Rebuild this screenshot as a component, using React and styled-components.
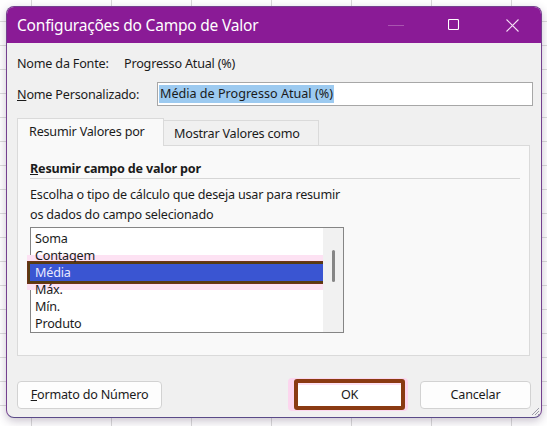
import React from "react";
import styled, { createGlobalStyle } from "styled-components";

const GlobalStyle = createGlobalStyle`
  html, body { margin: 0; padding: 0; }
  body {
    width: 547px;
    height: 426px;
    overflow: hidden;
    background-color: #ffffff;
    background-image:
      linear-gradient(to right, #d9d9d9 1px, transparent 1px),
      linear-gradient(to bottom, #dcdcdc 1px, transparent 1px);
    background-size: 80px 24px;
    background-position: 31px 21px;
    font-family: "Noto Sans", "Open Sans", sans-serif;
    color: #1b1b1b;
  }
  * { box-sizing: border-box; }
`;

const Page = styled.div`
  padding: 6px 0 0 6px;
`;

const Dialog = styled.div`
  position: relative;
  width: 536px;
  height: 412px;
  border: 1px solid #74408f;
  border-bottom-color: #5a4a88;
  border-radius: 8px;
  overflow: hidden;
  background: #f0f0f0;
  display: flex;
  flex-direction: column;
  box-shadow: 0 3px 10px rgba(60, 40, 80, 0.28);
`;

const TitleBar = styled.div`
  height: 36px;
  flex: none;
  background: #8a1b96;
  display: flex;
  align-items: center;
  padding-left: 10px;
`;

const Title = styled.div`
  flex: 1;
  color: #ffffff;
  font-size: 15.5px;
  letter-spacing: -0.2px;
`;

const Controls = styled.div`
  display: flex;
  height: 100%;
`;

const ControlButton = styled.div`
  width: 58px;
  height: 100%;
  display: flex;
  align-items: center;
  justify-content: center;
  color: ${(p) => p.$color || "#ffffff"};
`;

const Body = styled.div`
  flex: 1;
  display: flex;
  flex-direction: column;
  padding: 8px 10px 0 10px;
  font-size: 12.6px;
  letter-spacing: -0.2px;
`;

const FieldRow = styled.div`
  height: 24px;
  display: flex;
  align-items: center;
  margin-top: ${(p) => p.$gap || 0}px;
`;

const Label = styled.div`
  width: ${(p) => p.$width}px;
  flex: none;
`;

const TextInput = styled.div`
  flex: 1;
  height: 24px;
  margin-right: -2px;
  background: #ffffff;
  border: 1px solid #a7a7a7;
  display: flex;
  align-items: center;
  padding-left: 1px;
`;

const Selected = styled.span`
  background: #9ccaf0;
  padding: 1px 1px 1px 1px;
  line-height: 16px;
  letter-spacing: 0;
`;

const Tabs = styled.div`
  display: flex;
  align-items: flex-end;
  margin-top: 12px;
  position: relative;
  z-index: 1;
`;

const Tab = styled.div`
  width: ${(p) => p.$width}px;
  height: ${(p) => (p.$active ? 28 : 25)}px;
  background: ${(p) => (p.$active ? "#f9f9f9" : "#f0f0f0")};
  border: 1px solid #dadada;
  border-bottom: none;
  ${(p) => (p.$active ? "" : "border-left: none;")}
  margin-bottom: ${(p) => (p.$active ? -1 : 0)}px;
  display: flex;
  align-items: center;
  padding-left: ${(p) => (p.$active ? 11 : 10)}px;
  padding-bottom: ${(p) => (p.$active ? 2 : 0)}px;
`;

const Panel = styled.div`
  width: 513px;
  height: 211px;
  background: #f9f9f9;
  border: 1px solid #dadada;
  padding: 13px 9px 0 12px;
  display: flex;
  flex-direction: column;
`;

const Heading = styled.div`
  font-weight: 700;
  height: 19px;
  line-height: 19px;
  border-bottom: 1px solid #d6d6d6;
  box-sizing: content-box;
`;

const Description = styled.div`
  margin-top: 6px;
  line-height: 20px;
`;

const ListBox = styled.div`
  margin-top: 2px;
  width: 314px;
  height: 106px;
  background: #ffffff;
  border: 1px solid #858585;
  display: flex;
`;

const Items = styled.div`
  flex: 1;
  padding-top: 2px;
`;

const Item = styled.div`
  height: 17px;
  line-height: 17px;
  padding-left: 4px;
  ${(p) =>
    p.$selected
      ? `
    background: #3a55d2;
    color: #e8e8ff;
    margin-left: -1px;
    padding-left: 5px;
    outline: 2px solid #573b12;
    box-shadow: 0 0 0 3px #6e3418, 0 -6px 0 3px #fde2f3, 0 6px 0 3px #fde2f3, 8px 0 0 3px #fde2f3;
  `
      : ""}
`;

const ScrollTrack = styled.div`
  width: 20px;
  background: #f1f1f1;
  display: flex;
  justify-content: center;
  padding-top: 22px;
`;

const Thumb = styled.div`
  width: 3px;
  height: 32px;
  border-radius: 2px;
  background: #868686;
`;

const Footer = styled.div`
  display: flex;
  align-items: center;
  margin-top: 23px;
`;

const Button = styled.div`
  width: ${(p) => p.$width}px;
  height: 28px;
  background: #fdfdfd;
  border: 1px solid #d2d2d2;
  border-radius: 4px;
  display: flex;
  align-items: center;
  justify-content: center;
  margin-left: ${(p) => p.$ml || 0}px;
`;

const OkButton = styled.div`
  width: 111px;
  height: 31px;
  margin-left: auto;
  background: #ffffff;
  border: 4px solid #8a3a12;
  border-radius: 3px;
  display: flex;
  align-items: center;
  justify-content: center;
  box-shadow: inset 0 2px 0 #fde0f2, 0 0 0 1px #fcd6ee, -5px 0 0 1px #fcd6ee,
    2px 0 0 1px #fcd6ee;
`;

const Grip = styled.svg`
  position: absolute;
  right: 1px;
  bottom: 1px;
`;

export default function App() {
  return (
    <>
      <GlobalStyle />
      <Page>
        <Dialog>
          <TitleBar>
            <Title>Configurações do Campo de Valor</Title>
            <Controls>
              <ControlButton $color="#a955b0">
                <svg width="16" height="16" viewBox="0 0 16 16">
                  <line x1="0" y1="8.5" x2="16" y2="8.5" stroke="currentColor" strokeWidth="1" />
                </svg>
              </ControlButton>
              <ControlButton>
                <svg width="12" height="12" viewBox="0 0 12 12">
                  <rect x="0.5" y="0.5" width="10" height="10" rx="1" fill="none" stroke="currentColor" strokeWidth="1.1" />
                </svg>
              </ControlButton>
              <ControlButton $color="#f4dcf4">
                <svg width="13" height="13" viewBox="0 0 13 13">
                  <path d="M0.5 0.5 L12.5 12.5 M12.5 0.5 L0.5 12.5" stroke="currentColor" strokeWidth="1.1" />
                </svg>
              </ControlButton>
            </Controls>
          </TitleBar>
          <Body>
            <FieldRow>
              <Label $width={107}>Nome da Fonte:</Label>
              <span>Progresso Atual (%)</span>
            </FieldRow>
            <FieldRow $gap={7}>
              <Label $width={140}>
                <u>N</u>ome Personalizado:
              </Label>
              <TextInput>
                <Selected>Média de Progresso Atual (%)</Selected>
              </TextInput>
            </FieldRow>
            <Tabs>
              <Tab $active $width={147}>Resumir Valores por</Tab>
              <Tab $width={155}>Mostrar Valores como</Tab>
            </Tabs>
            <Panel>
              <Heading>
                <u>R</u>esumir campo de valor por
              </Heading>
              <Description>
                Escolha o tipo de cálculo que deseja usar para resumir
                <br />
                os dados do campo selecionado
              </Description>
              <ListBox>
                <Items>
                  <Item>Soma</Item>
                  <Item>Contagem</Item>
                  <Item $selected>Média</Item>
                  <Item>Máx.</Item>
                  <Item>Mín.</Item>
                  <Item>Produto</Item>
                </Items>
                <ScrollTrack>
                  <Thumb />
                </ScrollTrack>
              </ListBox>
            </Panel>
            <Footer>
              <Button $width={145}>
                <span>
                  <u>F</u>ormato do Número
                </span>
              </Button>
              <OkButton>OK</OkButton>
              <Button $width={111} $ml={15}>Cancelar</Button>
            </Footer>
          </Body>
          <Grip width="10" height="10" viewBox="0 0 10 10">
            <path d="M9 2 L2 9 M9 5 L5 9 M9 8 L8 9" stroke="#9a9aa6" strokeWidth="1" />
          </Grip>
        </Dialog>
      </Page>
    </>
  );
}
